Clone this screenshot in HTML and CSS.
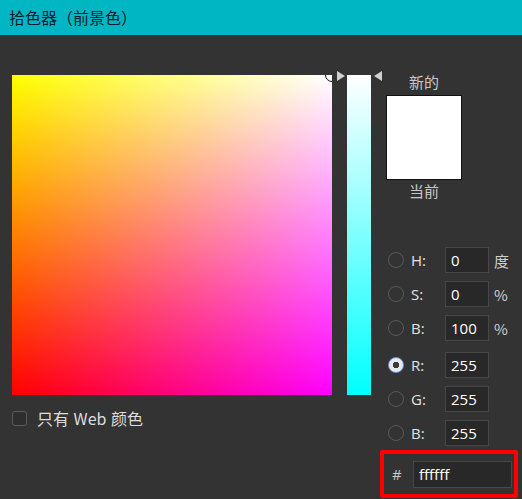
FILE: index.html
```html
<!DOCTYPE html>
<html lang="zh">
<head>
<meta charset="utf-8">
<title>拾色器</title>
<link rel="stylesheet" href="styles.css">
</head>
<body>
<div class="dialog">
  <header class="titlebar">拾色器（前景色）</header>
  <main class="content">
    <section class="left">
      <div class="field">
        <span class="picker"></span>
      </div>
      <label class="webonly">
        <span class="checkbox"></span>
        <span>只有 Web 颜色</span>
      </label>
    </section>
    <section class="slider">
      <span class="arrow arrow-right"></span>
      <div class="strip"></div>
      <span class="arrow arrow-left"></span>
    </section>
    <section class="right">
      <div class="preview">
        <div class="cap">新的</div>
        <div class="swatch"></div>
        <div class="cap">当前</div>
      </div>
      <div class="group hsb">
        <div class="row"><span class="radio"></span><span class="lbl">H:</span><span class="inp">0</span><span class="unit">度</span></div>
        <div class="row"><span class="radio"></span><span class="lbl">S:</span><span class="inp">0</span><span class="unit">%</span></div>
        <div class="row"><span class="radio"></span><span class="lbl">B:</span><span class="inp">100</span><span class="unit">%</span></div>
      </div>
      <div class="group rgb">
        <div class="row"><span class="radio on"></span><span class="lbl">R:</span><span class="inp">255</span></div>
        <div class="row"><span class="radio"></span><span class="lbl">G:</span><span class="inp">255</span></div>
        <div class="row"><span class="radio"></span><span class="lbl">B:</span><span class="inp">255</span></div>
      </div>
      <div class="hex">
        <span class="hash">#</span>
        <span class="hexinp">ffffff</span>
      </div>
    </section>
  </main>
</div>
</body>
</html>
```

FILE: styles.css
```css
* { box-sizing: border-box; }
html, body {
  margin: 0;
  padding: 0;
  background: #333333;
  width: 522px;
  height: 499px;
  overflow: hidden;
  font-family: "Noto Sans CJK SC", "Noto Sans", sans-serif;
}
.dialog { width: 522px; height: 499px; }
.titlebar {
  height: 35px;
  background: #01b6c3;
  color: #0d1d2b;
  font-size: 16px;
  line-height: 35px;
  padding-left: 9px;
}
.content {
  display: flex;
  padding-top: 40px;
}
.left {
  margin-left: 12px;
  width: 320px;
}
.field {
  position: relative;
  width: 320px;
  height: 320px;
  overflow: hidden;
  background: linear-gradient(to right, #000000, #0000ff),
              linear-gradient(to bottom, #00ff00, #000000),
              #ff0000;
  background-blend-mode: screen;
}
.picker {
  position: absolute;
  left: 313px;
  top: -7px;
  width: 14px;
  height: 14px;
  border: 1.5px solid #111;
  border-radius: 50%;
}
.webonly {
  display: flex;
  align-items: center;
  gap: 10px;
  margin-top: 11px;
  color: #dddddd;
  font-size: 16px;
  word-spacing: 1px;
}
.checkbox {
  width: 15px;
  height: 15px;
  border: 1.5px solid #5a5a5a;
  border-radius: 3px;
  background: #2e2e2e;
}
.slider {
  position: relative;
  margin-left: 15px;
  width: 24px;
}
.strip {
  width: 24px;
  height: 320px;
  background: linear-gradient(to bottom, #ffffff, #00ffff);
}
.arrow {
  position: absolute;
  top: -4px;
  width: 0;
  height: 0;
  border-top: 5px solid transparent;
  border-bottom: 5px solid transparent;
}
.arrow-right {
  left: -10px;
  border-left: 8px solid #d0d0d0;
}
.arrow-left {
  right: -11px;
  border-right: 8px solid #d0d0d0;
}
.right {
  margin-left: 15px;
  width: 136px;
  color: #dddddd;
}
.preview {
  width: 76px;
  display: flex;
  flex-direction: column;
  align-items: center;
  margin-top: -4px;
}
.cap {
  font-size: 15px;
  line-height: 22px;
  color: #c8c8c8;
}
.swatch {
  width: 76px;
  height: 85px;
  background: #ffffff;
  border: 1px solid #111111;
  margin-top: 2px;
}
.group { display: flex; flex-direction: column; gap: 8px; }
.hsb { margin-top: 45px; }
.rgb { margin-top: 11px; }
.row {
  display: flex;
  align-items: center;
  height: 26px;
}
.radio {
  width: 16px;
  height: 16px;
  border: 1.5px solid #5a5a5a;
  border-radius: 50%;
  margin-left: 2px;
}
.radio.on {
  border: 1.5px solid #6f97d6;
  background: radial-gradient(circle, #3a3a3a 0 3px, #e8e8ee 3.5px);
}
.lbl {
  width: 34px;
  margin-left: 7px;
  font-family: "Open Sans", "Noto Sans", sans-serif;
  font-size: 15px;
  color: #e2e2e2;
}
.inp {
  width: 44px;
  height: 26px;
  border: 1px solid #474747;
  background: #282828;
  color: #ffffff;
  font-family: "Open Sans", "Noto Sans", sans-serif;
  font-size: 15px;
  line-height: 24px;
  padding-left: 5px;
}
.unit {
  margin-left: 5px;
  font-size: 15px;
  color: #cfcfcf;
}
.hex {
  display: flex;
  align-items: center;
  margin-top: 4px;
  margin-left: -6px;
  width: 138px;
  height: 48px;
  border: 4px solid #ff0000;
  border-radius: 2px;
  padding-left: 8px;
}
.hash {
  width: 21px;
  font-family: "Open Sans", "Noto Sans", sans-serif;
  font-size: 15px;
  color: #c8c8c8;
}
.hexinp {
  width: 99px;
  height: 27px;
  border: 1px solid #474747;
  background: #282828;
  color: #ffffff;
  font-family: "Open Sans", "Noto Sans", sans-serif;
  font-size: 15px;
  line-height: 25px;
  padding-left: 5px;
}
```
